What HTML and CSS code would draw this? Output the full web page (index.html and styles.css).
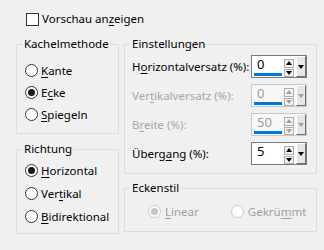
FILE: index.html
```html
<!DOCTYPE html>
<html lang="de">
<head>
    <meta charset="UTF-8">
    <title>Kacheln</title>
    <link rel="stylesheet" href="styles.css">
</head>
<body>
    <div class="dialog">
        <label class="check"><span class="box"></span><span>Vorschau an<u>z</u>eigen</span></label>

        <div class="groups">
            <div class="col">
                <fieldset class="group kachel">
                    <legend>Kachelmethode</legend>
                    <div class="opt"><span class="radio"></span><span><u>K</u>ante</span></div>
                    <div class="opt"><span class="radio on"></span><span>E<u>c</u>ke</span></div>
                    <div class="opt"><span class="radio"></span><span><u>S</u>piegeln</span></div>
                </fieldset>
                <fieldset class="group richtung">
                    <legend>Richtung</legend>
                    <div class="opt"><span class="radio on"></span><span><u>H</u>orizontal</span></div>
                    <div class="opt"><span class="radio"></span><span>Ver<u>t</u>ikal</span></div>
                    <div class="opt"><span class="radio"></span><span><u>B</u>idirektional</span></div>
                </fieldset>
            </div>

            <div class="col">
                <fieldset class="group settings">
                    <legend>Einstellungen</legend>
                    <div class="row">
                        <span class="lbl">H<u>o</u>rizontalversatz (%):</span>
                        <div class="spin">
                            <div class="field"><span class="val">0</span><span class="bar"></span></div>
                            <div class="arrows"><span class="up"></span><span class="down"></span></div>
                            <div class="drop"><span></span></div>
                        </div>
                    </div>
                    <div class="row off">
                        <span class="lbl">Ver<u>t</u>ikalversatz (%):</span>
                        <div class="spin">
                            <div class="field"><span class="val">0</span><span class="bar"></span></div>
                            <div class="arrows"><span class="up"></span><span class="down"></span></div>
                            <div class="drop"><span></span></div>
                        </div>
                    </div>
                    <div class="row off">
                        <span class="lbl">B<u>r</u>eite (%):</span>
                        <div class="spin">
                            <div class="field"><span class="val">50</span><span class="bar"></span></div>
                            <div class="arrows"><span class="up"></span><span class="down"></span></div>
                            <div class="drop"><span></span></div>
                        </div>
                    </div>
                    <div class="row">
                        <span class="lbl">Überg<u>a</u>ng (%):</span>
                        <div class="spin">
                            <div class="field"><span class="val">5</span></div>
                            <div class="arrows"><span class="up"></span><span class="down"></span></div>
                            <div class="drop"><span></span></div>
                        </div>
                    </div>
                </fieldset>
                <fieldset class="group ecken">
                    <legend>Eckenstil</legend>
                    <div class="inline">
                        <div class="opt off"><span class="radio on"></span><span><u>L</u>inear</span></div>
                        <div class="opt off"><span class="radio"></span><span>Gekrü<u>m</u>mt</span></div>
                    </div>
                </fieldset>
            </div>
        </div>

        <div class="watermark"><span class="star">☆</span><span>sternchen06</span></div>
    </div>
</body>
</html>
```

FILE: styles.css
```css
body {
    margin: 0;
    background-color: #f0f0f0;
    font-family: "Noto Sans", "Open Sans", sans-serif;
    font-size: 11.5px;
    color: #000;
}
.dialog {
    position: relative;
    width: 324px;
    height: 250px;
    overflow: hidden;
}
u {
    text-decoration-thickness: 1px;
    text-underline-offset: 2px;
}
.check {
    display: flex;
    align-items: center;
    gap: 3px;
    margin: 11px 0 0 26px;
    line-height: 16px;
}
.check .box {
    width: 13px;
    height: 13px;
    box-sizing: border-box;
    border: 1px solid #333;
    background-color: #fff;
}
.groups {
    display: flex;
    gap: 5px;
    margin: 9px 0 0 16px;
}
.col {
    display: flex;
    flex-direction: column;
    gap: 6px;
}
.col:first-child {
    width: 103px;
}
.col:last-child {
    width: 193px;
}
.group {
    margin: 0;
    min-width: 0;
    border: 1px solid #dcdcdc;
    padding: 0 8px;
}
.group legend {
    padding: 0 2px;
    margin-left: -3px;
    line-height: 16px;
}
.kachel {
    padding-top: 7px;
    padding-bottom: 8px;
}
.richtung {
    margin-top: 1px;
    padding-top: 2px;
    padding-bottom: 5px;
}
.opt {
    display: flex;
    align-items: center;
    gap: 3px;
    height: 22px;
    white-space: nowrap;
}
.richtung .opt {
    height: 23px;
}
.radio {
    flex: none;
    width: 13px;
    height: 13px;
    box-sizing: border-box;
    border: 1px solid #333;
    border-radius: 50%;
    background-color: #fff;
    display: flex;
    align-items: center;
    justify-content: center;
}
.radio.on::after {
    content: "";
    width: 7px;
    height: 7px;
    border-radius: 50%;
    background-color: #1a1a1a;
}
.opt.off {
    color: #a0a0a0;
}
.opt.off .radio {
    border-color: #cccccc;
    background-color: #fbfbfb;
}
.opt.off .radio.on::after {
    background-color: #c4c4c4;
}

/* Einstellungen */
.settings {
    padding: 3px 9px 8px 7px;
}
.settings legend {
    margin-left: -2px;
}
.row {
    display: flex;
    align-items: center;
    height: 23px;
    margin-bottom: 6px;
}
.row:last-child {
    margin-bottom: 0;
}
.lbl {
    flex: 1;
    white-space: nowrap;
}
.row.off .lbl {
    color: #a6a6a6;
}
.spin {
    flex: none;
    width: 56px;
    height: 23px;
    box-sizing: border-box;
    border: 1px solid #7a7a7a;
    background-color: #fff;
    display: flex;
}
.row.off .spin {
    border-color: #c8c8c8;
    background-color: #f7f7f7;
}
.field {
    width: 30px;
    display: flex;
    flex-direction: column;
    padding-left: 5px;
}
.val {
    font-size: 13px;
    line-height: 17px;
}
.row.off .val {
    color: #9a9a9a;
}
.bar {
    height: 3px;
    margin: 0 1px 0 -3px;
    background-color: #0078d7;
}
.arrows {
    width: 11px;
    margin: 3px 0 0 1px;
    display: flex;
    flex-direction: column;
    gap: 1px;
}
.arrows span {
    height: 7px;
    border: 1px solid #adadad;
    background-color: #f2f2f2;
    display: flex;
    align-items: center;
    justify-content: center;
}
.arrows .up::after {
    content: "";
    border-left: 3px solid transparent;
    border-right: 3px solid transparent;
    border-bottom: 4px solid #000;
}
.arrows .down::after {
    content: "";
    border-left: 3px solid transparent;
    border-right: 3px solid transparent;
    border-top: 4px solid #000;
}
.row.off .arrows .up::after {
    border-bottom-color: #a0a0a0;
}
.row.off .arrows .down::after {
    border-top-color: #a0a0a0;
}
.drop {
    width: 9px;
    margin-left: 2px;
    border-top: 1px solid #fff;
    border-left: 1px solid #fff;
    border-right: 1px solid #6d6d6d;
    border-bottom: 1px solid #6d6d6d;
    background-color: #e6e6e6;
    display: flex;
    align-items: center;
    justify-content: center;
}
.drop span {
    border-left: 3px solid transparent;
    border-right: 3px solid transparent;
    border-top: 4px solid #000;
}
.row.off .drop span {
    border-top-color: #a0a0a0;
}

/* Eckenstil */
.ecken {
    padding: 4px 8px 9px 23px;
}
.ecken legend {
    margin-left: -18px;
}
.inline {
    display: flex;
    gap: 32px;
}
.inline .opt {
    gap: 4px;
}

/* Wasserzeichen */
.watermark {
    position: absolute;
    left: 142px;
    top: 232px;
    display: flex;
    align-items: center;
    color: #fff;
    font-style: italic;
    font-size: 10.5px;
    line-height: 14px;
    letter-spacing: 0.5px;
    text-shadow: 0 0 1px #d0d0d0;
}
.watermark .star {
    font-size: 16px;
    line-height: 16px;
    font-style: normal;
}
```
